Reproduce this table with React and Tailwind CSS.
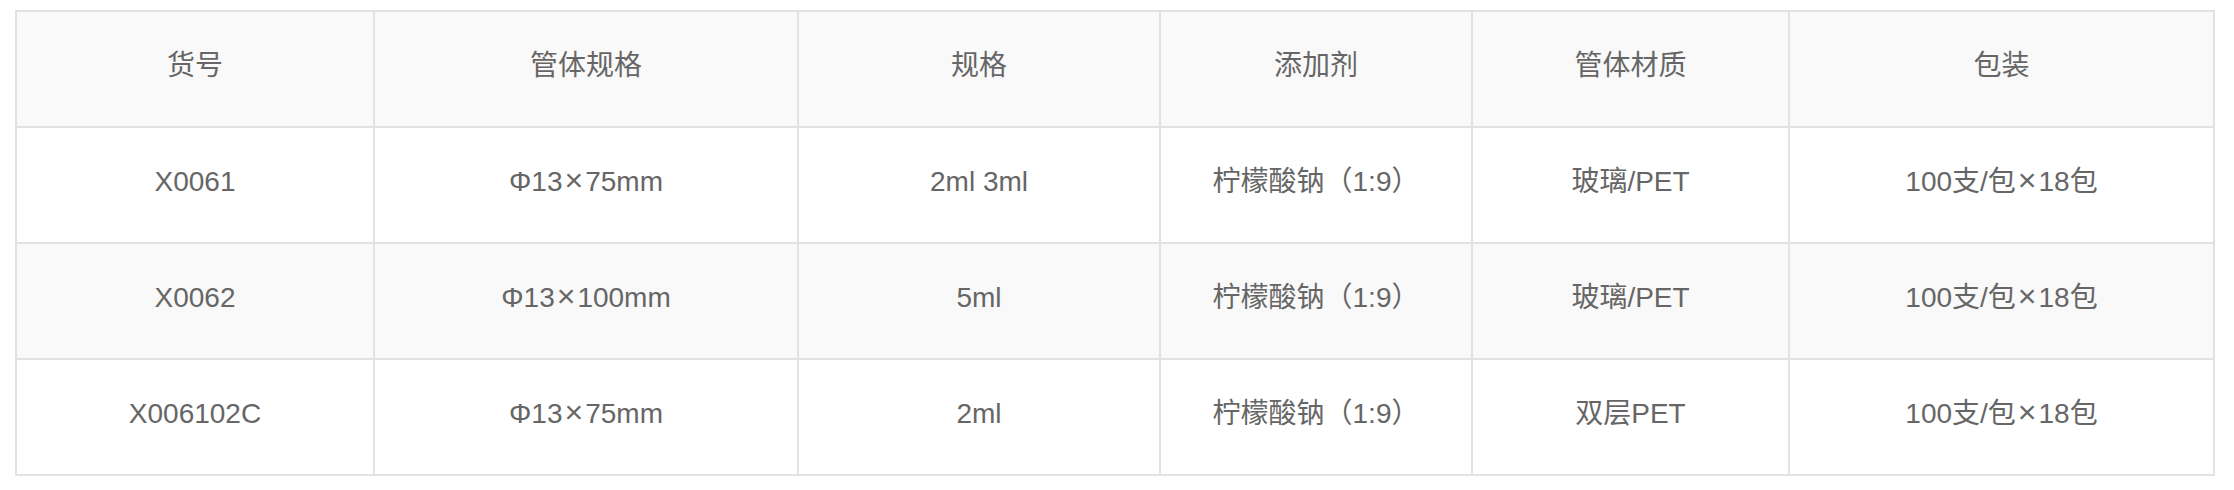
import React from "react";

const headers = ["货号", "管体规格", "规格", "添加剂", "管体材质", "包装"];
const rows = [
  ["X0061", "Φ13×75mm", "2ml 3ml", "柠檬酸钠（1:9）", "玻璃/PET", "100支/包×18包"],
  ["X0062", "Φ13×100mm", "5ml", "柠檬酸钠（1:9）", "玻璃/PET", "100支/包×18包"],
  ["X006102C", "Φ13×75mm", "2ml", "柠檬酸钠（1:9）", "双层PET", "100支/包×18包"],
];
const widths = [358, 424, 362, 312, 317, 425];

function Cell({ text }) {
  const parts = text.split("×");
  if (parts.length === 1) return text;
  return (
    <>
      {parts[0]}
      <span className="mx-[2px] text-[32px] leading-[0]">×</span>
      {parts[1]}
    </>
  );
}

export default function App() {
  return (
    <div
      className="w-[2234px] h-[490px] bg-white pt-[10px] pl-[15px]"
      style={{ fontFamily: '"Liberation Sans", "Noto Sans CJK SC", sans-serif' }}
    >
      <table className="table-fixed border-collapse w-[2200px] border-2 border-[#e2e2e2] text-[28px] text-[#666666]">
        <colgroup>
          {widths.map((w, i) => (
            <col key={i} style={{ width: w }} />
          ))}
        </colgroup>
        <thead>
          <tr className="h-[116px] bg-[#f9f9f9]">
            {headers.map((h) => (
              <th key={h} className="border-2 border-[#e2e2e2] font-normal text-center align-middle pb-[6px]">
                {h}
              </th>
            ))}
          </tr>
        </thead>
        <tbody>
          {rows.map((r, i) => (
            <tr key={i} className={i === 1 ? "h-[116px] bg-[#f9f9f9]" : "h-[116px] bg-white"}>
              {r.map((c, j) => (
                <td key={j} className="border-2 border-[#e2e2e2] text-center align-middle pb-[6px]">
                  <Cell text={c} />
                </td>
              ))}
            </tr>
          ))}
        </tbody>
      </table>
    </div>
  );
}
